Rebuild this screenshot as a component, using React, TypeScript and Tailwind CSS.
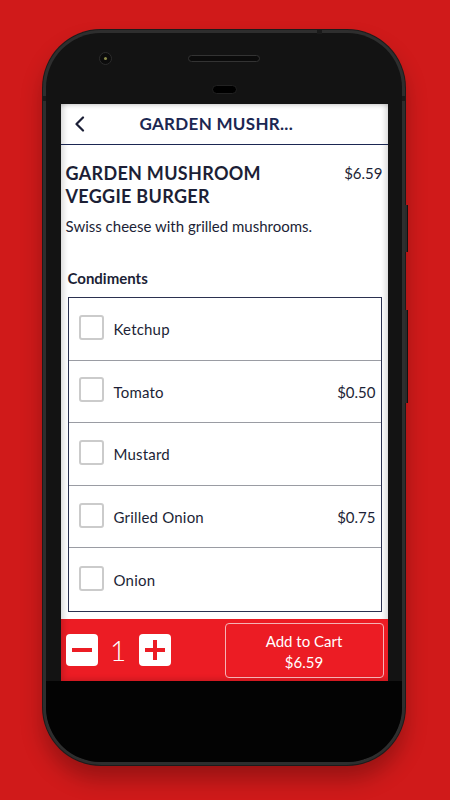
type Condiment = {
  name: string;
  price?: string;
};

const condiments: Condiment[] = [
  { name: "Ketchup" },
  { name: "Tomato", price: "$0.50" },
  { name: "Mustard" },
  { name: "Grilled Onion", price: "$0.75" },
  { name: "Onion" },
];

const CondimentRow: React.FC<{ item: Condiment; last: boolean }> = ({ item, last }) => {
  return (
    <div
      className={`h-[62.6px] shrink-0 flex items-center pl-[10px] pr-[5px] pb-[3px] ${
        last ? "" : "border-b border-[#9a9ca3]"
      }`}
    >
      <div className="w-[25px] h-[25px] rounded-[3px] border-2 border-[#cbcbcb] bg-white shrink-0" />
      <div className="ml-[10px] pt-[4px] text-[15px] tracking-[0.2px] text-[#1c1f36] flex-1">{item.name}</div>
      {item.price && <div className="pt-[4px] text-[15px] text-[#1c1f36]">{item.price}</div>}
    </div>
  );
};

export default function App() {
  return (
    <div className="w-[450px] h-[800px] bg-[#d01a1a] pt-[30px] pl-[43px] overflow-hidden font-['Lato',sans-serif]">
      <div className="relative w-[362px] h-[735px] rounded-[58px] bg-[#2e2e2e] p-[3px] ring-1 ring-[#1c1c1c] shadow-[0_14px_22px_rgba(0,0,0,0.28)]">
        {/* side buttons and antenna lines */}
        <div className="absolute left-full top-[175px] w-[3px] h-[47px] bg-[#2a2a2a] border-r border-[#111]" />
        <div className="absolute left-full top-[280px] w-[3px] h-[93px] bg-[#2a2a2a] border-r border-[#111]" />
        <div className="absolute top-0 left-[274px] w-[5px] h-[4px] bg-[#1a1a1a]" />
        <div className="absolute top-[66px] left-0 w-[3px] h-[5px] bg-[#1a1a1a]" />
        <div className="absolute top-[66px] right-0 w-[3px] h-[5px] bg-[#1a1a1a]" />

        <div className="w-full h-full rounded-[55px] bg-[#131313] flex flex-col items-center overflow-hidden">
          {/* top bezel */}
          <div className="w-full h-[71px] shrink-0 flex flex-col">
            <div className="flex items-center pt-[19px] pl-[53px]">
              <div className="w-[13px] h-[13px] rounded-full bg-[#0c0c0c] border border-[#2c2c2c] flex items-center justify-center">
                <div className="w-[3px] h-[3px] rounded-full bg-[#8a8a4a]" />
              </div>
              <div className="ml-[76px] w-[72px] h-[7px] rounded-full bg-[#0b0b0b] border border-[#333]" />
            </div>
            <div className="self-center mt-[20px] w-[25px] h-[9px] rounded-full bg-black border border-[#222]" />
          </div>

          {/* screen */}
          <div className="w-[327px] h-[577px] shrink-0 bg-white flex flex-col overflow-hidden shadow-[inset_6px_0_6px_-4px_rgba(0,0,0,0.18),inset_-6px_0_6px_-4px_rgba(0,0,0,0.18)]">
            <div className="h-[41px] shrink-0 flex items-center pl-[13px] border-b border-[#1b2752] shadow-[inset_0_5px_5px_-4px_rgba(0,0,0,0.2)]">
              <svg width="11" height="16" viewBox="0 0 11 16" fill="none">
                <path d="M9 1.5 L2.5 8 L9 14.5" stroke="#1b1f36" strokeWidth="2.2" strokeLinecap="round" strokeLinejoin="round" />
              </svg>
              <div className="ml-[55px] text-[17px] font-bold tracking-[0.3px] text-[#1b2752]">GARDEN MUSHR...</div>
            </div>

            <div className="flex-1 flex flex-col min-h-0 overflow-hidden">
              <div className="flex justify-between pl-[5px] pr-[5px] mt-[17px]">
                <div className="text-[18px] leading-[23px] font-bold text-[#1c1f36] tracking-[0.3px]">
                  GARDEN MUSHROOM
                  <br />
                  VEGGIE BURGER
                </div>
                <div className="text-[15px] leading-[23px] text-[#1c1f36]">$6.59</div>
              </div>
              <div className="pl-[5px] mt-[8px] text-[15px] leading-[20px] text-[#1c1f36]">
                Swiss cheese with grilled mushrooms.
              </div>
              <div className="pl-[7px] mt-[32px] text-[15px] leading-[20px] font-bold text-[#1c1f36]">Condiments</div>

              <div className="ml-[7px] mr-[6px] mt-[9px] border border-[#2b3150] flex flex-col shrink-0">
                {condiments.map((item, index) => (
                  <CondimentRow key={index} item={item} last={index === condiments.length - 1} />
                ))}
              </div>
            </div>

            {/* bottom bar */}
            <div className="h-[62px] shrink-0 bg-[#ec1c24] flex items-center pl-[5px] pr-[4px] shadow-[inset_4px_-3px_6px_-2px_rgba(0,0,0,0.18)]">
              <button className="w-[32px] h-[32px] rounded-[4px] bg-white flex items-center justify-center">
                <div className="w-[20px] h-[4px] bg-[#ec1c24]" />
              </button>
              <div className="w-[41px] text-center text-[28px] leading-[32px] font-light text-white">1</div>
              <button className="relative w-[32px] h-[32px] rounded-[4px] bg-white flex items-center justify-center">
                <div className="w-[20px] h-[4px] bg-[#ec1c24]" />
                <div className="absolute w-[4px] h-[20px] bg-[#ec1c24]" />
              </button>
              <button className="ml-auto w-[159px] h-[55px] pt-[3px] rounded-[4px] border border-[#f5b3b5] flex flex-col items-center justify-center text-white text-[15px] leading-[21px]">
                <span>Add to Cart</span>
                <span>$6.59</span>
              </button>
            </div>
          </div>

          <div className="flex-1 w-full bg-[#030303]" />
        </div>
      </div>
    </div>
  );
}
